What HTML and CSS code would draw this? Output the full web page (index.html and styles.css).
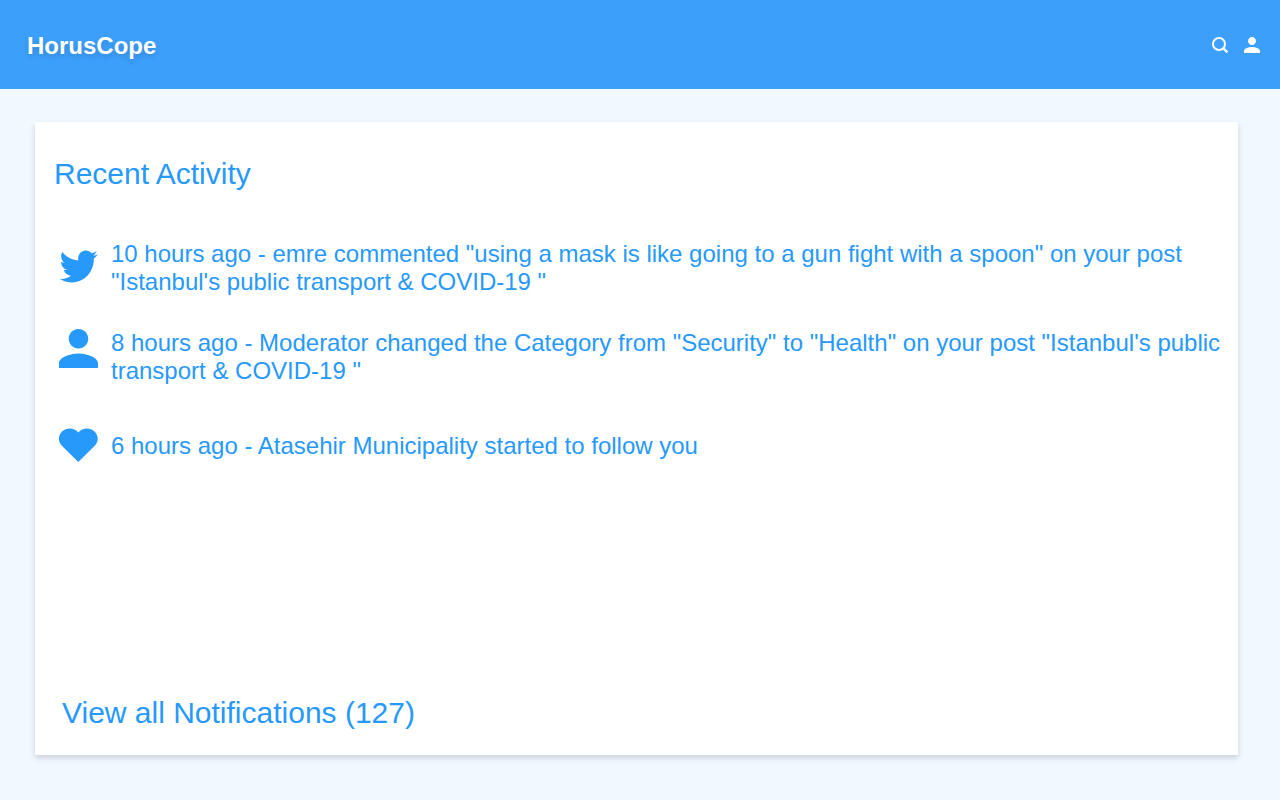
FILE: index.html
```html
<!DOCTYPE html>
<html lang="en">
<head>
  <meta charset="utf-8">
  <meta name="viewport" content="width=device-width, initial-scale=1">
  <title>HorusCope</title>
  <link rel="stylesheet" href="styles.css">
</head>
<body class="page">
  <header class="topbar">
    <a class="brand" href="#">HorusCope</a>
    <nav class="actions">
      <button class="icon-button" type="button" aria-label="Search">
        <svg width="16" height="16" viewBox="0 0 16 16" fill="none" stroke="currentColor" stroke-width="2"><circle cx="7" cy="7" r="6"/><path d="M11 11L15.4 15.4" stroke-width="2.4"/></svg>
      </button>
      <button class="icon-button" type="button" aria-label="Profile">
        <svg width="16" height="16" viewBox="4 4 16 16" fill="currentColor"><path d="M12 12c2.21 0 4-1.79 4-4s-1.79-4-4-4-4 1.79-4 4 1.79 4 4 4zm0 2c-2.67 0-8 1.34-8 4v2h16v-2c0-2.66-5.33-4-8-4z"/></svg>
      </button>
    </nav>
  </header>
  <main class="card">
    <h1 class="card-title">Recent Activity</h1>
    <ul class="feed">
      <li class="feed-item">
        <svg class="feed-icon" viewBox="-0.4 1.6 24.6 24" fill="currentColor" aria-hidden="true"><path transform="scale(1 1.03)" d="M23.954 4.569c-.885.389-1.83.654-2.825.775 1.014-.611 1.794-1.574 2.163-2.723-.951.555-2.005.959-3.127 1.184-.896-.959-2.173-1.559-3.591-1.559-2.717 0-4.92 2.203-4.92 4.917 0 .39.045.765.127 1.124C7.691 8.094 4.066 6.13 1.64 3.161c-.427.722-.666 1.561-.666 2.475 0 1.71.87 3.213 2.188 4.096-.807-.026-1.566-.248-2.228-.616v.061c0 2.385 1.693 4.374 3.946 4.827-.413.111-.849.171-1.296.171-.314 0-.615-.03-.916-.086.631 1.953 2.445 3.377 4.604 3.417-1.68 1.319-3.809 2.105-6.102 2.105-.39 0-.779-.023-1.17-.067 2.189 1.394 4.768 2.209 7.557 2.209 9.054 0 13.999-7.496 13.999-13.986 0-.209 0-.42-.015-.63.961-.689 1.8-1.56 2.46-2.548l-.047-.02z"/></svg>
        <p class="feed-text">10 hours ago - emre commented "using a mask is like going to a gun fight with a spoon" on your post "Istanbul's public transport &amp; COVID-19 "</p>
      </li>
      <li class="feed-item feed-item-top">
        <svg class="feed-icon" viewBox="4 4 16 16" fill="currentColor" aria-hidden="true"><path d="M12 12c2.21 0 4-1.79 4-4s-1.79-4-4-4-4 1.79-4 4 1.79 4 4 4zm0 2c-2.67 0-8 1.34-8 4v2h16v-2c0-2.66-5.33-4-8-4z"/></svg>
        <p class="feed-text">8 hours ago - Moderator changed the Category from "Security" to "Health" on your post "Istanbul's public transport &amp; COVID-19 "</p>
      </li>
      <li class="feed-item">
        <svg class="feed-icon" viewBox="0 -1.4 39 39" fill="currentColor" aria-hidden="true"><path d="M19.3 4C23.3-.9 31-1.3 35.6 3.1C39.8 7.3 39.6 13.5 35.7 17.3L19.3 33.6L2.9 17.3C-1.1 13.5-1.1 7.3 3 3.1C7.6-1.3 15.3-.9 19.3 4Z"/></svg>
        <p class="feed-text">6 hours ago - Atasehir Municipality started to follow you</p>
      </li>
    </ul>
    <a class="view-all" href="#">View all Notifications (127)</a>
  </main>
</body>
</html>
```
FILE: styles.css
```css
* {
  box-sizing: border-box;
}

.page {
  display: flex;
  flex-direction: column;
  min-height: 100vh;
  margin: 0;
  background: #f1f8ff;
  color: #2699fb;
  font-family: "Liberation Sans", Arial, sans-serif;
}

.topbar {
  display: flex;
  align-items: center;
  justify-content: space-between;
  padding: 32px 20px 29px 27px;
  background: #3ca0fb;
  color: #fff;
}

.brand {
  color: inherit;
  font-size: 24px;
  font-weight: bold;
  line-height: 28px;
  text-decoration: none;
  text-shadow: 0 3px 6px rgba(0, 0, 0, 0.16);
}

.actions {
  display: flex;
  gap: 16px;
  padding-bottom: 2px;
}

.icon-button {
  display: flex;
  padding: 0;
  border: 0;
  background: none;
  color: inherit;
  cursor: pointer;
}

.card {
  display: flex;
  flex: 1;
  flex-direction: column;
  margin: 33px 42px 45px 35px;
  padding: 34px 16px 24px 19px;
  background: #fff;
  box-shadow: 0 3px 6px rgba(0, 0, 0, 0.16);
}

.card-title {
  margin: 0;
  font-size: 30px;
  font-weight: normal;
  line-height: 36px;
}

.feed {
  display: flex;
  flex-direction: column;
  gap: 33px;
  margin: 48px 0 32px;
  padding: 0 0 0 5px;
  list-style: none;
}

.feed-item {
  display: flex;
  align-items: center;
  gap: 13px;
  min-height: 56px;
}

.feed-item-top {
  align-items: flex-start;
}

.feed-icon {
  flex: none;
  width: 39px;
  height: 39px;
}

.feed-text {
  margin: 0;
  font-size: 24px;
  line-height: 28px;
}

.view-all {
  align-self: flex-start;
  margin: auto 8px 0;
  color: inherit;
  font-size: 30px;
  line-height: 36px;
  text-decoration: none;
}
```
